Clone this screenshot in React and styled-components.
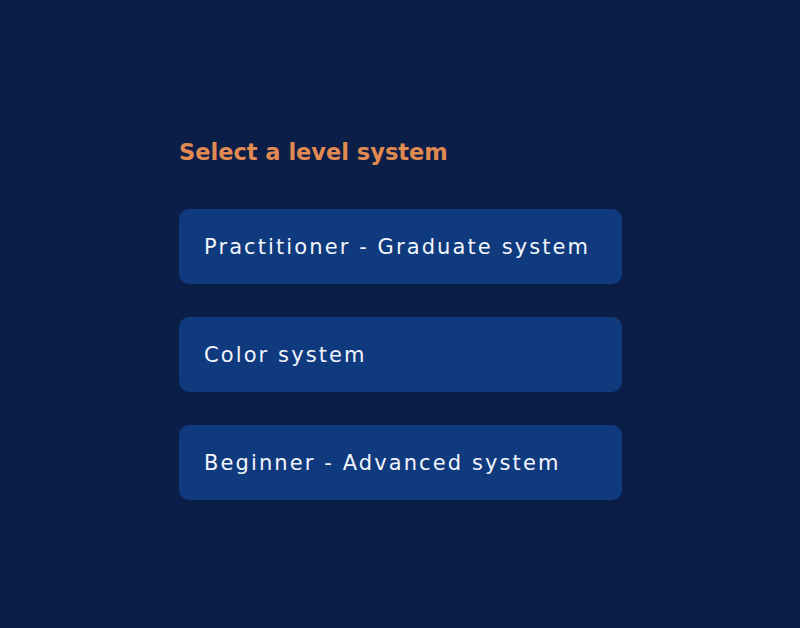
import React from 'react'
import styled, { createGlobalStyle } from 'styled-components'

const levels = [
  'Practitioner - Graduate system',
  'Color system',
  'Beginner - Advanced system',
]

function App() {
  return (
    <>
      <Global />
      <Page>
        <Panel>
          <Title>Select a level system</Title>
          <List>
            {levels.map((l) => (
              <Option key={l}>{l}</Option>
            ))}
          </List>
        </Panel>
      </Page>
    </>
  )
}

const Global = createGlobalStyle`
  html, body {
    margin: 0;
    background: #0a1e47;
  }
`

const Page = styled.div`
  width: 800px;
  height: 628px;
  background: #0a1e47;
  display: flex;
  justify-content: flex-start;
  padding: 136px 0 0 179px;
  box-sizing: border-box;
`

const Panel = styled.div`
  width: 443px;
  display: flex;
  flex-direction: column;
`

const Title = styled.h1`
  margin: 0 0 40px 0;
  font-family: 'DejaVu Sans', sans-serif;
  font-weight: bold;
  font-size: 22.5px;
  line-height: 33px;
  color: #e08a52;
`

const List = styled.div`
  display: flex;
  flex-direction: column;
  gap: 33px;
`

const Option = styled.button`
  height: 75px;
  border: none;
  border-radius: 10px;
  background: #103a7e;
  color: #f2f5fb;
  text-align: left;
  padding: 0 0 0 25px;
  font-family: 'DejaVu Sans', sans-serif;
  font-size: 21px;
  letter-spacing: 2.1px;
  cursor: pointer;
`

export default App
